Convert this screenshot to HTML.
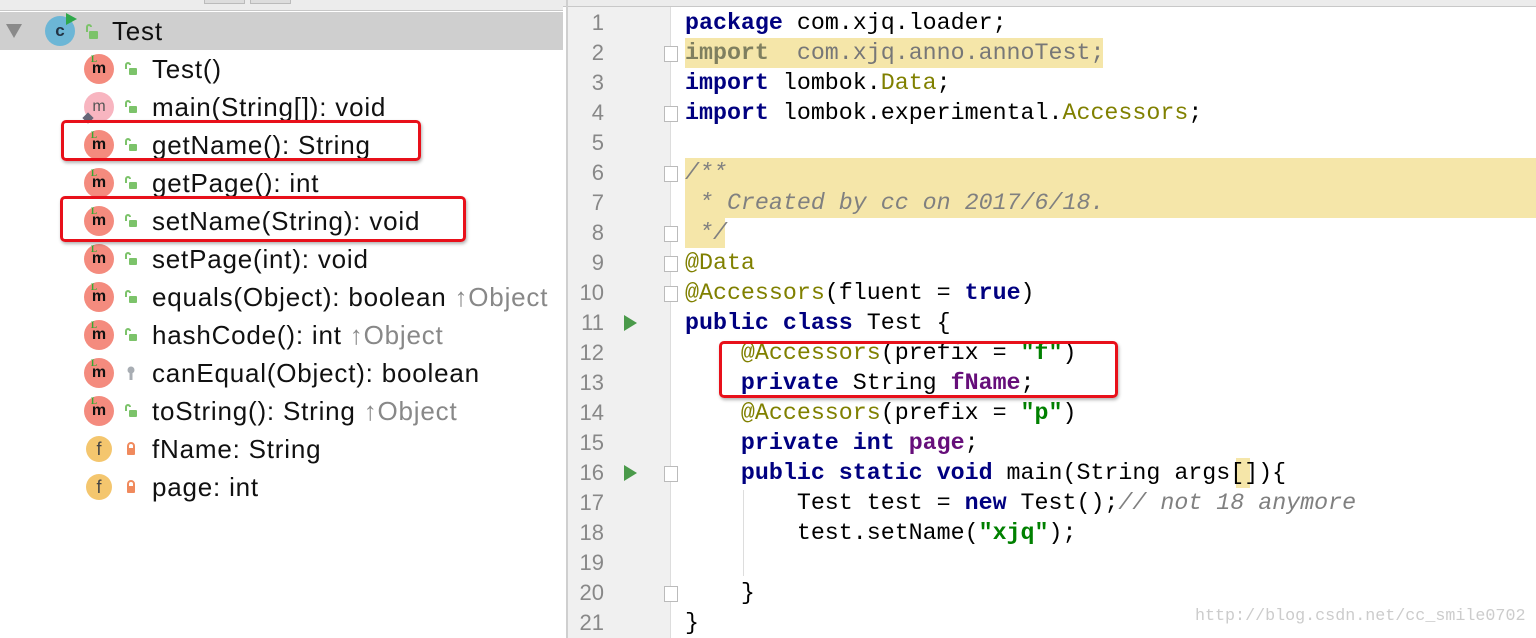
<!DOCTYPE html>
<html><head><meta charset="utf-8"><style>
*{margin:0;padding:0;box-sizing:border-box}
body{width:1536px;height:638px;overflow:hidden;background:#fff;position:relative;font-family:"Liberation Sans",sans-serif}
.a{position:absolute}
.row{position:absolute;left:0;height:38px;width:563px}
.ic{position:absolute;left:84px;top:4px;width:30px;height:30px;border-radius:50%;background:#f48b7e;font:bold 16px "Liberation Sans",sans-serif;color:#111;text-align:center;line-height:30px}
.ic i{position:absolute;left:7px;top:1px;font:bold 9px "Liberation Serif",serif;color:#3a3;font-style:normal;line-height:9px}
.f{background:#f4c66e;font-weight:normal;color:#444;font-size:18px;left:86px;width:26px;height:26px;top:6px;line-height:26px}
.lk{position:absolute;left:124px;top:12px;width:14px;height:14px}
.t{position:absolute;left:152px;top:0;line-height:38px;font-size:26px;letter-spacing:0.8px;color:#111;white-space:nowrap}
.g{color:#888}
.code{position:absolute;left:685px;font:23.3px "Liberation Mono",monospace;line-height:30px;white-space:pre;color:#000}
.ln{position:absolute;left:566px;width:38px;text-align:right;font:22px "Liberation Sans",sans-serif;color:#888;line-height:30px}
.k{color:#000080;font-weight:bold}
.an{color:#808000}
.s{color:#008000;font-weight:bold}
.p{color:#660e7a;font-weight:bold}
.c{color:#808080;font-style:italic}
.red{position:absolute;border:3px solid #e8101a;border-radius:5px;box-shadow:1px 2px 3px rgba(0,0,0,.3)}
.fold{position:absolute;left:664px;width:14px;height:16px;border:1px solid #bbb;background:#fff}
.run{position:absolute;left:624px;width:0;height:0;border-left:13px solid #4a9a4a;border-top:8px solid transparent;border-bottom:8px solid transparent}
</style></head><body>
<div class="a" style="left:0;top:0;width:563px;height:11px;background:#ececec;border-bottom:1px solid #c8c8c8"></div>
<div class="a" style="left:204px;top:0;width:41px;height:4px;background:#ddd;border:1px solid #bbb;border-top:none"></div>
<div class="a" style="left:250px;top:0;width:41px;height:4px;background:#ddd;border:1px solid #bbb;border-top:none"></div>
<div class="a" style="left:563px;top:0;width:973px;height:7px;background:#ececec;border-bottom:1px solid #c8c8c8"></div>
<div class="a" style="left:0;top:12px;width:563px;height:38px;background:#cfcfcf"></div>
<div class="a" style="left:6px;top:24px;width:0;height:0;border-top:14px solid #8a8a8a;border-left:8px solid transparent;border-right:8px solid transparent"></div>
<div class="a" style="left:45px;top:16px;width:30px;height:30px;border-radius:50%;background:#6cb6d6;font:bold 17px 'Liberation Sans',sans-serif;color:#234;text-align:center;line-height:30px">c</div>
<div class="a" style="left:66px;top:13px;width:0;height:0;border-left:11px solid #2fa84a;border-top:6px solid transparent;border-bottom:6px solid transparent"></div>
<svg class="a" style="left:84px;top:24px" width="16" height="16"><path d="M3 8V3a2 2 0 0 1 4 0" stroke="#7cc36a" stroke-width="2" fill="none"/><rect x="5" y="7" width="9" height="8" rx="1" fill="#7cc36a"/></svg>
<div class="a" style="left:112px;top:12px;line-height:38px;font-size:26px;letter-spacing:0.8px;color:#111">Test</div>

<div class="a" style="left:566px;top:0;width:2px;height:638px;background:#cfcfcf"></div>
<div class="a" style="left:568px;top:7px;width:103px;height:631px;background:#f0f0f0;border-right:1px solid #ddd"></div>

<div class="row" style="top:50px"><div class="ic"><i>L</i>m</div><svg class="lk" viewBox="0 0 14 14"><path d="M2 7V3a2 2 0 0 1 4 0" stroke="#7cc36a" stroke-width="2" fill="none"/><rect x="5" y="6" width="8" height="7" rx="1" fill="#7cc36a"/></svg><div class="t">Test()</div></div>
<div class="row" style="top:88px"><div class="ic" style="background:#f8b5c0;font-weight:normal;color:#555">m</div><div class="a" style="left:84px;top:26px;width:8px;height:8px;background:#667;transform:rotate(45deg)"></div><svg class="lk" viewBox="0 0 14 14"><path d="M2 7V3a2 2 0 0 1 4 0" stroke="#7cc36a" stroke-width="2" fill="none"/><rect x="5" y="6" width="8" height="7" rx="1" fill="#7cc36a"/></svg><div class="t">main(String[]): void</div></div>
<div class="row" style="top:126px"><div class="ic"><i>L</i>m</div><svg class="lk" viewBox="0 0 14 14"><path d="M2 7V3a2 2 0 0 1 4 0" stroke="#7cc36a" stroke-width="2" fill="none"/><rect x="5" y="6" width="8" height="7" rx="1" fill="#7cc36a"/></svg><div class="t">getName(): String</div></div>
<div class="row" style="top:164px"><div class="ic"><i>L</i>m</div><svg class="lk" viewBox="0 0 14 14"><path d="M2 7V3a2 2 0 0 1 4 0" stroke="#7cc36a" stroke-width="2" fill="none"/><rect x="5" y="6" width="8" height="7" rx="1" fill="#7cc36a"/></svg><div class="t">getPage(): int</div></div>
<div class="row" style="top:202px"><div class="ic"><i>L</i>m</div><svg class="lk" viewBox="0 0 14 14"><path d="M2 7V3a2 2 0 0 1 4 0" stroke="#7cc36a" stroke-width="2" fill="none"/><rect x="5" y="6" width="8" height="7" rx="1" fill="#7cc36a"/></svg><div class="t">setName(String): void</div></div>
<div class="row" style="top:240px"><div class="ic"><i>L</i>m</div><svg class="lk" viewBox="0 0 14 14"><path d="M2 7V3a2 2 0 0 1 4 0" stroke="#7cc36a" stroke-width="2" fill="none"/><rect x="5" y="6" width="8" height="7" rx="1" fill="#7cc36a"/></svg><div class="t">setPage(int): void</div></div>
<div class="row" style="top:278px"><div class="ic"><i>L</i>m</div><svg class="lk" viewBox="0 0 14 14"><path d="M2 7V3a2 2 0 0 1 4 0" stroke="#7cc36a" stroke-width="2" fill="none"/><rect x="5" y="6" width="8" height="7" rx="1" fill="#7cc36a"/></svg><div class="t">equals(Object): boolean <span class="g">↑Object</span></div></div>
<div class="row" style="top:316px"><div class="ic"><i>L</i>m</div><svg class="lk" viewBox="0 0 14 14"><path d="M2 7V3a2 2 0 0 1 4 0" stroke="#7cc36a" stroke-width="2" fill="none"/><rect x="5" y="6" width="8" height="7" rx="1" fill="#7cc36a"/></svg><div class="t">hashCode(): int <span class="g">↑Object</span></div></div>
<div class="row" style="top:354px"><div class="ic"><i>L</i>m</div><svg class="lk" viewBox="0 0 14 14"><circle cx="7" cy="4" r="3.5" fill="#a8adb3"/><rect x="5.5" y="6" width="3" height="8" fill="#a8adb3"/></svg><div class="t">canEqual(Object): boolean</div></div>
<div class="row" style="top:392px"><div class="ic"><i>L</i>m</div><svg class="lk" viewBox="0 0 14 14"><path d="M2 7V3a2 2 0 0 1 4 0" stroke="#7cc36a" stroke-width="2" fill="none"/><rect x="5" y="6" width="8" height="7" rx="1" fill="#7cc36a"/></svg><div class="t">toString(): String <span class="g">↑Object</span></div></div>
<div class="row" style="top:430px"><div class="ic f">f</div><svg class="lk" viewBox="0 0 14 14"><path d="M4 7V4a3 3 0 0 1 6 0v3" stroke="#f08a5d" stroke-width="2" fill="none"/><rect x="3" y="6" width="8" height="7" rx="1" fill="#f08a5d"/></svg><div class="t">fName: String</div></div>
<div class="row" style="top:468px"><div class="ic f">f</div><svg class="lk" viewBox="0 0 14 14"><path d="M4 7V4a3 3 0 0 1 6 0v3" stroke="#f08a5d" stroke-width="2" fill="none"/><rect x="3" y="6" width="8" height="7" rx="1" fill="#f08a5d"/></svg><div class="t">page: int</div></div>

<div class="red" style="left:61px;top:120px;width:360px;height:41px"></div>
<div class="red" style="left:60px;top:196px;width:406px;height:46px"></div>

<div class="a" style="left:685px;top:38px;width:418px;height:30px;background:#f5e6a9"></div>
<div class="a" style="left:685px;top:158px;width:851px;height:60px;background:#f5e6a9"></div>
<div class="a" style="left:685px;top:218px;width:40px;height:30px;background:#f5e6a9"></div>
<div class="a" style="left:1236px;top:458px;width:14px;height:30px;background:#f5e6a9"></div>
<div class="a" style="left:743px;top:490px;width:1px;height:86px;background:#ddd"></div>

<div class="ln" style="top:8px">1<br>2<br>3<br>4<br>5<br>6<br>7<br>8<br>9<br>10<br>11<br>12<br>13<br>14<br>15<br>16<br>17<br>18<br>19<br>20<br>21</div>
<div class="run" style="top:315px"></div>
<div class="run" style="top:465px"></div>
<div class="fold" style="top:46px"></div>
<div class="fold" style="top:106px"></div>
<div class="fold" style="top:166px"></div>
<div class="fold" style="top:226px"></div>
<div class="fold" style="top:256px"></div>
<div class="fold" style="top:286px"></div>
<div class="fold" style="top:466px"></div>
<div class="fold" style="top:586px"></div>

<div class="code" style="top:8px"><span class="k">package</span> com.xjq.loader;
<span class="k" style="color:#7f7f5f">import</span><span style="color:#777">  com.xjq.anno.annoTest;</span>
<span class="k">import</span> lombok.<span class="an">Data</span>;
<span class="k">import</span> lombok.experimental.<span class="an">Accessors</span>;

<span class="c">/**</span>
<span class="c"> * Created by cc on 2017/6/18.</span>
<span class="c"> */</span>
<span class="an">@Data</span>
<span class="an">@Accessors</span>(fluent = <span class="k">true</span>)
<span class="k">public class</span> Test {
    <span class="an">@Accessors</span>(prefix = <span class="s">"f"</span>)
    <span class="k">private</span> String <span class="p">fName</span>;
    <span class="an">@Accessors</span>(prefix = <span class="s">"p"</span>)
    <span class="k">private int</span> <span class="p">page</span>;
    <span class="k">public static void</span> main(String args[]){
        Test test = <span class="k">new</span> Test();<span class="c">// not 18 anymore</span>
        test.setName(<span class="s">"xjq"</span>);

    }
}</div>

<div class="red" style="left:719px;top:341px;width:399px;height:57px"></div>
<div class="a" style="left:1195px;top:607px;font:16.7px 'Liberation Mono',monospace;color:#ccc">http://blog.csdn.net/cc_smile0702</div>
</body></html>
